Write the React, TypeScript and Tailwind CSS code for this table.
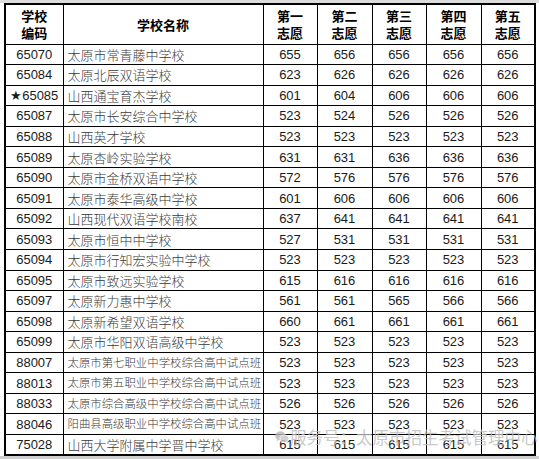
const rows: [string, string, number[]][] = [
  ["65070", "太原市常青藤中学校", [655, 656, 656, 656, 656]],
  ["65084", "太原北辰双语学校", [623, 626, 626, 626, 626]],
  ["★65085", "山西通宝育杰学校", [601, 604, 606, 606, 606]],
  ["65087", "太原市长安综合中学校", [523, 524, 526, 526, 526]],
  ["65088", "山西英才学校", [523, 523, 523, 523, 523]],
  ["65089", "太原杏岭实验学校", [631, 631, 636, 636, 636]],
  ["65090", "太原市金桥双语中学校", [572, 576, 576, 576, 576]],
  ["65091", "太原市泰华高级中学校", [601, 606, 606, 606, 606]],
  ["65092", "山西现代双语学校南校", [637, 641, 641, 641, 641]],
  ["65093", "太原市恒中中学校", [527, 531, 531, 531, 531]],
  ["65094", "太原市行知宏实验中学校", [523, 523, 523, 523, 523]],
  ["65095", "太原市致远实验学校", [615, 616, 616, 616, 616]],
  ["65097", "太原新力惠中学校", [561, 561, 565, 566, 566]],
  ["65098", "太原新希望双语学校", [660, 661, 661, 661, 661]],
  ["65099", "太原市华阳双语高级中学校", [523, 523, 523, 523, 523]],
  ["88007", "太原市第七职业中学校综合高中试点班", [523, 523, 523, 523, 523]],
  ["88013", "太原市第五职业中学校综合高中试点班", [523, 523, 523, 523, 523]],
  ["88033", "太原市综合高级中学校综合高中试点班", [526, 526, 526, 526, 526]],
  ["88046", "阳曲县高级职业中学校综合高中试点班", [523, 523, 523, 523, 523]],
  ["75028", "山西大学附属中学晋中学校", [615, 615, 615, 615, 615]],
];

const choices = ["一", "二", "三", "四", "五"];

function WeChatIcon() {
  return (
    <svg width="14" height="12" viewBox="0 0 15 13">
      <ellipse cx="5.8" cy="5.2" rx="5.6" ry="4.8" fill="#b9b9b9" />
      <path d="M2.5 8.6 L1.8 11 L4.6 9.6 Z" fill="#b9b9b9" />
      <ellipse cx="10" cy="8.2" rx="4.8" ry="4" fill="#c8c8c8" stroke="#fff" strokeWidth="0.8" />
      <path d="M12.6 11 L13.6 12.8 L11 11.8 Z" fill="#c8c8c8" />
    </svg>
  );
}

export default function App() {
  const cjk = { fontFamily: '"Noto Sans CJK SC", sans-serif' };
  const num = { fontFamily: '"Liberation Sans", Arial, sans-serif' };

  return (
    <div className="relative w-[539px] h-[459px] bg-white overflow-hidden">
      <div className="h-[3px] bg-[#dcdcdc]" />
      <div className="pl-[4px]">
        <table className="table-fixed border-collapse border-2 border-black w-[530px] text-[#1a1a1a]">
          <colgroup>
            <col className="w-[58px]" />
            <col className="w-[200px]" />
            <col className="w-[54px]" />
            <col className="w-[55px]" />
            <col className="w-[54px]" />
            <col className="w-[55px]" />
            <col className="w-[54px]" />
          </colgroup>
          <thead>
            <tr className="h-[40px]" style={cjk}>
              <th className="border border-black text-[13px] leading-[17px] font-bold text-black">
                学校
                <br />
                编码
              </th>
              <th className="border border-black text-[13px] font-bold text-black">学校名称</th>
              {choices.map((c) => (
                <th key={c} className="border border-black text-[13px] leading-[17px] font-bold text-black">
                  第{c}
                  <br />
                  志愿
                </th>
              ))}
            </tr>
          </thead>
          <tbody>
            {rows.map(([code, name, scores]) => (
              <tr key={code} className="h-[20.55px]">
                <td className="border border-black text-center text-[13px] leading-none p-0 whitespace-nowrap" style={num}>
                  {code}
                </td>
                <td
                  className={
                    "border border-black pl-[4px] p-0 leading-none whitespace-nowrap overflow-hidden text-[#3a3a3a] font-light " +
                    (name.length > 15 ? "text-[11.4px]" : "text-[13px]")
                  }
                  style={cjk}
                >
                  {name}
                </td>
                {scores.map((s, i) => (
                  <td key={i} className="border border-black text-center text-[13px] leading-none p-0" style={num}>
                    {s}
                  </td>
                ))}
              </tr>
            ))}
          </tbody>
        </table>
      </div>
      <div className="absolute left-0 right-0 bottom-0 h-[3px] bg-[#cfcfcf]" />

      {/* watermark */}
      <div className="absolute left-[275px] top-[429px] flex items-center gap-[1px] whitespace-nowrap pointer-events-none opacity-80">
        <WeChatIcon />
        <span className="text-[16.5px] leading-none text-[#bdbdbd]" style={cjk}>
          服务号：太原市招生考试管理中心
        </span>
      </div>
    </div>
  );
}
